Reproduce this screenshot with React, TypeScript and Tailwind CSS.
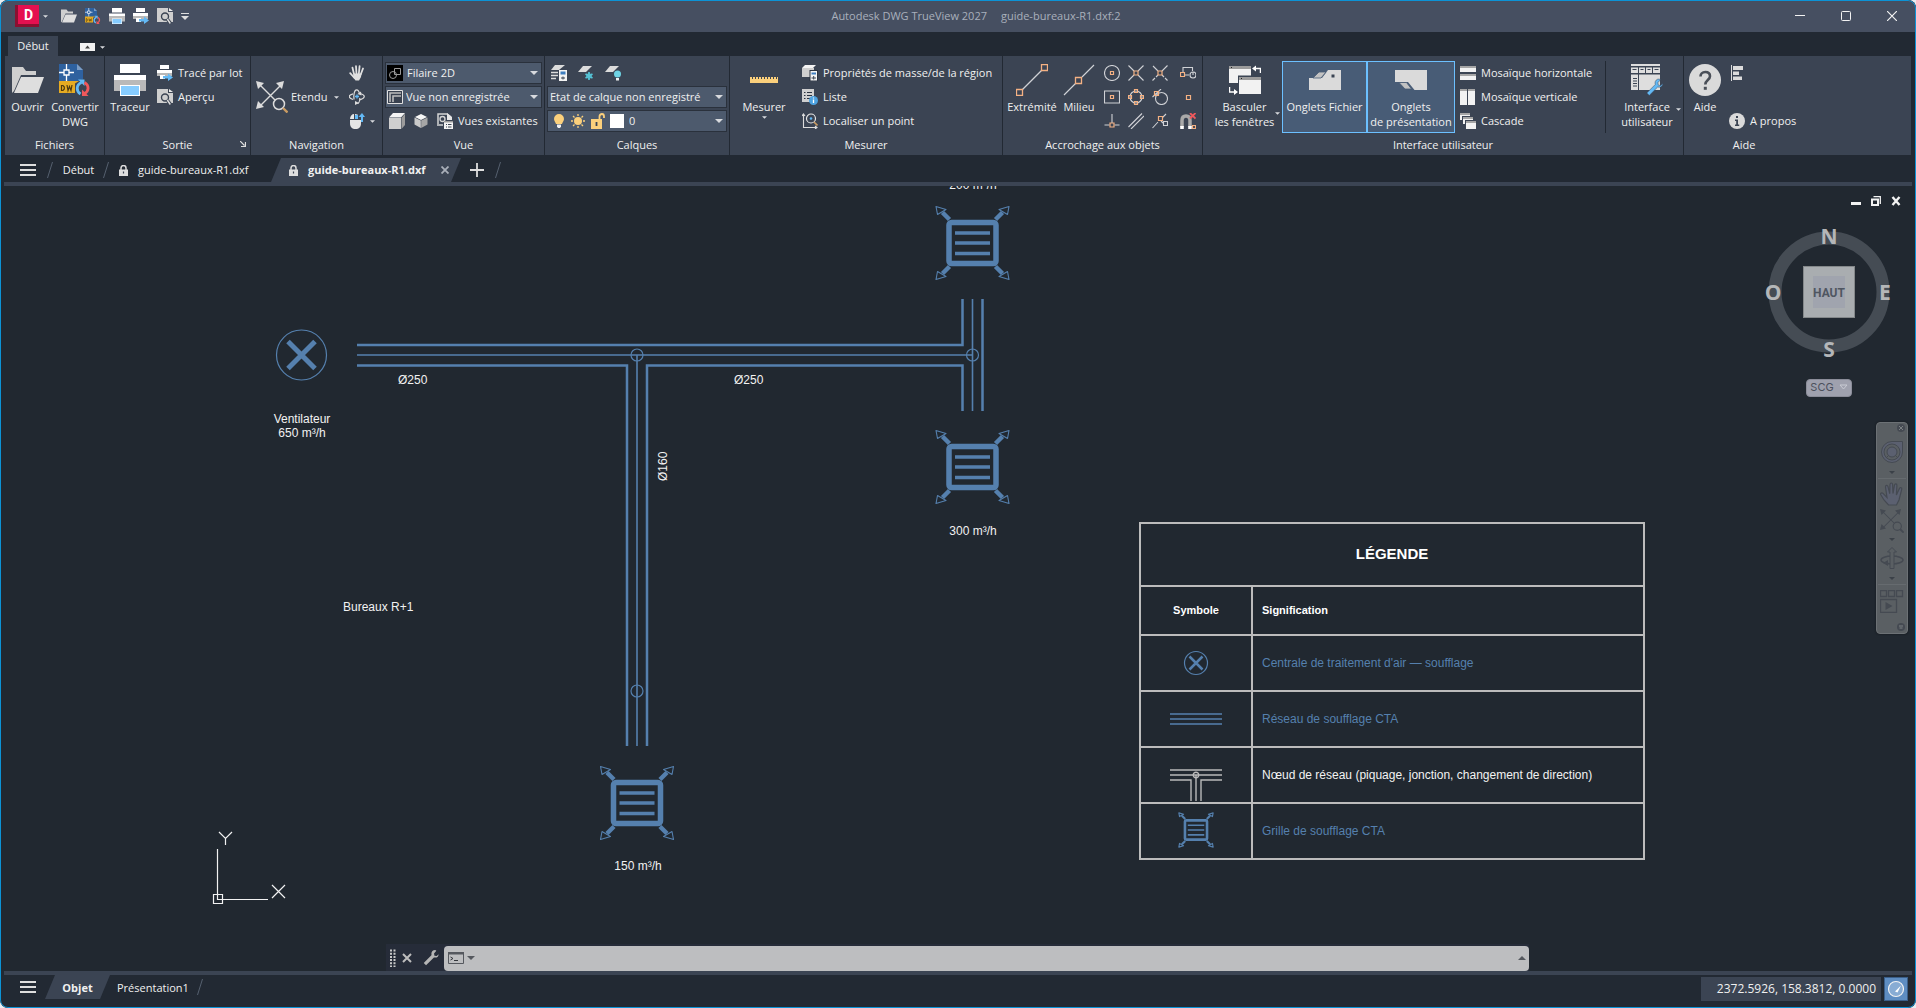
import type { ReactNode } from "react";

/* ------------------------------------------------------------------ */
/* Icon primitives                                                     */
/* ------------------------------------------------------------------ */

type IconProps = { size?: number };

function Svg({ w, h, vb, children }: { w: number; h?: number; vb: string; children: ReactNode }) {
  return (
    <svg width={w} height={h ?? w} viewBox={vb} fill="none" aria-hidden="true" className="shrink-0">
      {children}
    </svg>
  );
}

function Caret({ up = false, small = false }: { up?: boolean; small?: boolean }) {
  return (
    <Svg w={small ? 5 : 8} h={small ? 3 : 4} vb="0 0 8 4">
      <path d={up ? "M0 4h8L4 0z" : "M0 0h8L4 4z"} fill="#d8dade" />
    </Svg>
  );
}

function FolderIcon({ size = 32 }: IconProps) {
  return (
    <Svg w={size} vb="0 0 32 32">
      <path d="M0 3h11l3 4h10v4H9L2 27l-2 2z" fill="#cfcfcf" />
      <path d="M9 13h23l-6 16H2z" fill="#dedede" />
    </Svg>
  );
}

function DwgIcon({ size = 32, bg = "#3b4453" }: IconProps & { bg?: string }) {
  return (
    <Svg w={size} vb="0 0 32 32">
      <path d="M0 0h18l6 6v12H0z" fill="#2e619f" />
      <path d="M18 0v6h6z" fill="#7b9cc4" />
      <path d="M0 17h24v12H0z" fill="#e6ab22" />
      <path d="M0 8.500h5M10 8.500h5M7.500 0v6M7.500 11v6M5 6h5v5H5z" stroke="#fff" strokeWidth="1.300" />
      <path d="M2.500 21v6M2.500 21.500h1.500l1.300 1.500v2l-1.300 1.500H2.500M8 21l1 5.500 1.500-4 1.500 4 1-5.500" stroke="#4c3a10" strokeWidth="1.200" />
      <path d="M22.500 15.500h9.500v16h-16v-12z" fill={bg} />
      <path d="M21.500 30c-4.500-3-4.500-9 1-11.500" stroke="#63b9f5" strokeWidth="2.800" />
      <path d="M19 15.500h6.500v6.500z" fill="#63b9f5" />
      <path d="M25.500 18.500c5 3 4.500 8.500 0 11" stroke="#f0585c" strokeWidth="2.800" />
      <path d="M29.500 32h-6.500v-6.500z" fill="#f0585c" />
    </Svg>
  );
}

function PrinterIcon({ size = 32 }: IconProps) {
  return (
    <Svg w={size} vb="0 0 32 32">
      <path d="M6 0h20v9H6z" fill="#fff" />
      <path d="M0 11h32v5H0z" fill="#fff" />
      <path d="M0 16h32v11H0z" fill="#b9b9b9" />
      <path d="M6 21h20v11H6z" fill="#fff" />
      <path d="M7 22h18v9H7z" fill="#86ccff" />
    </Svg>
  );
}

function BatchPlotIcon() {
  return (
    <Svg w={16} vb="0 0 16 16">
      <path d="M3 0h9v4H3z" fill="#fff" />
      <path d="M0 5h15v3H0z" fill="#fff" />
      <path d="M0 8h15v3H0z" fill="#b9b9b9" />
      <path d="M3 10h5v4H3z" fill="#fff" />
      <path d="M6 11h5V8.500l5 4-5 3.500v-2.500H6z" fill="#63b9f5" />
    </Svg>
  );
}

function PreviewIcon() {
  return (
    <Svg w={16} vb="0 0 16 16">
      <path d="M0 0h11v4h5v10H0z" fill="#cfcfcf" />
      <path d="M12 0l4 3h-4z" fill="#eee" />
      <circle cx="8" cy="8.500" r="3.500" fill="#cfcfcf" stroke="#3b4453" strokeWidth="1.400" />
      <path d="M10.500 11.500l3 4" stroke="#3b4453" strokeWidth="3.400" />
      <path d="M10.300 11l3 4.500" stroke="#dedede" strokeWidth="1.400" />
    </Svg>
  );
}

function ZoomExtentsIcon({ size = 32, color = "#dcdcdc", handle = "#c99b62" }: IconProps & { color?: string; handle?: string }) {
  return (
    <Svg w={size} vb="0 0 32 32">
      <path d="M3 3l16 16M26 3L3 26" stroke={color} strokeWidth="1.400" />
      <path d="M0 0l8 2-6 6zM28 0l-8 2 6 6zM0 28l2-8 6 6z" fill={color} />
      <circle cx="23" cy="23" r="5.500" stroke={color} strokeWidth="1.500" />
      <path d="M27 27l4.500 4.500" stroke={handle} strokeWidth="2.400" />
    </Svg>
  );
}

function HandIcon({ size = 16, color = "#e0e0e0" }: IconProps & { color?: string }) {
  return (
    <Svg w={size} vb="0 0 16 16">
      <path d="M4.500 8.500h8L12 12l-2 3.500H6.500L4 12z" fill={color} />
      <path d="M5 9L3.500 2.700M7.500 9L7 1.200M9.800 9l.8-7.800M11.700 9.500l2.300-6M5.500 13L1.200 8.200" stroke={color} strokeWidth="1.800" strokeLinecap="round" />
    </Svg>
  );
}

function OrbitIcon() {
  return (
    <Svg w={16} vb="0 0 16 16">
      <path d="M5 10.500C4.300 5.500 5.500.800 7.500.800c1.500 0 2.700 1.700 3 4.200M10.800 9c0 3-1.200 5.500-2.500 5.500" stroke="#dcdcdc" strokeWidth="1.200" />
      <path d="M4 10.500C-1 9-1 6 4 4.800M12 4.800c4.500 1.500 4.500 4.500-1 6" stroke="#dcdcdc" strokeWidth="1.200" />
      <path d="M8 5.500v4M6 7.500h4" stroke="#63b9f5" strokeWidth="1.300" />
      <path d="M6 12l4 2-4 2zM12 2.500l-3.500 2.500 4 1.500z" fill="#dcdcdc" />
    </Svg>
  );
}

function MouseIcon() {
  return (
    <Svg w={16} vb="0 0 16 16">
      <path d="M1 7h11v3c0 4-2 6-5.500 6S1 14 1 10z" fill="#e6e6e6" />
      <path d="M1 6c0-3 2-5 4-5v5zM6 1c2 0 3 1 3 1v4H6z" fill="#e6e6e6" />
      <path d="M6 2h3v4H6z" fill="#63b9f5" />
      <path d="M12 9V4h-2.500L13 0l3 4h-2v5z" fill="#63b9f5" />
    </Svg>
  );
}

function WireframeIcon() {
  return (
    <Svg w={16} vb="0 0 16 16">
      <path d="M0 0h16v16H0z" fill="#000" />
      <circle cx="6" cy="10" r="3.500" stroke="#9a9a9a" />
      <path d="M7.500 3.500h6v6h-6z" stroke="#9a9a9a" />
    </Svg>
  );
}

function NamedViewIcon() {
  return (
    <Svg w={16} h={14} vb="0 0 16 14">
      <path d="M.5.500h15v13H.5z" fill="#39414f" stroke="#e0e0e0" />
      <path d="M3 12V3h11M6 12V6h8" stroke="#bdbdbd" strokeWidth="1.600" />
    </Svg>
  );
}

function CubeIcon() {
  return (
    <Svg w={16} vb="0 0 16 16">
      <path d="M0 4.500L4 0h12l-4 4.500z" fill="#f4f4f4" />
      <path d="M0 5h12v11H0z" fill="#cfcfcf" />
      <path d="M12.500 5L16 .8V12l-3.500 4z" fill="#9c9c9c" />
    </Svg>
  );
}

function IsoCubeIcon() {
  return (
    <Svg w={14} vb="0 0 14 14">
      <path d="M7 0l6 3-6 3-6-3z" fill="#f6f6f6" />
      <path d="M.5 3.500L6.800 6.600V14L.5 10.500z" fill="#cacaca" />
      <path d="M13.500 3.500L7.200 6.600V14l6.300-3.500z" fill="#a6a6a6" />
    </Svg>
  );
}

function ViewsIcon() {
  return (
    <Svg w={16} vb="0 0 16 16">
      <path d="M1 11V1h9l4 3" stroke="#d5d5d5" strokeWidth="1.500" />
      <path d="M10 0l5 4v3h-5z" fill="#e6e6e6" />
      <circle cx="5.500" cy="6" r="2.500" stroke="#d5d5d5" strokeWidth="1.300" />
      <path d="M0 12h6" stroke="#d5d5d5" strokeWidth="1.500" />
      <path d="M7 8h9v8H7z" fill="#f4f4f4" />
      <path d="M9 11.500h1M11 11.500h3.500M9 14h1M11 14h3.500" stroke="#3b4453" />
      <path d="M7 8h9v1.500H7z" fill="#9c9c9c" />
    </Svg>
  );
}

function LayerPropsIcon() {
  return (
    <Svg w={16} vb="0 0 16 16">
      <path d="M4 0h10L8 5H0z" fill="#dcdcdc" />
      <path d="M0 7.500h7M0 10.500h7M0 13.500h5" stroke="#dcdcdc" strokeWidth="1.500" />
      <path d="M8 5h8v11H8z" fill="#f4f4f4" />
      <path d="M9.500 6.500h5v3h-5z" fill="#3f7fc0" />
      <path d="M10 13h4M12 11.500v3" stroke="#3b4453" />
    </Svg>
  );
}

function LayerFreezeIcon() {
  return (
    <Svg w={16} vb="0 0 16 16">
      <path d="M5 1h9L8 7H0z" fill="#dcdcdc" />
      <path d="M11 7v8M7.500 9l7 4M14.500 9l-7 4" stroke="#55c3d6" strokeWidth="1.700" />
      <circle cx="11" cy="11" r="2.300" stroke="#55c3d6" />
    </Svg>
  );
}

function LayerOffIcon() {
  return (
    <Svg w={16} vb="0 0 16 16">
      <path d="M5 1h9L8 7H0z" fill="#dcdcdc" />
      <circle cx="12.500" cy="9" r="3.500" fill="#6fd3e4" />
      <path d="M11 13h3v2.500h-3z" fill="#f0f0f0" />
    </Svg>
  );
}

function BulbIcon() {
  return (
    <Svg w={12} h={14} vb="0 0 12 14">
      <path d="M6 0a5 5 0 0 1 5 5c0 2-1.500 3-2 5H3C2.500 8 1 7 1 5a5 5 0 0 1 5-5z" fill="#fbd07c" />
      <path d="M4 10.500h4v2L7 14H5l-1-1.500z" fill="#f0f0f0" />
    </Svg>
  );
}

function SunIcon() {
  return (
    <Svg w={16} vb="0 0 16 16">
      <circle cx="8" cy="8" r="4" fill="#fbd07c" />
      <path d="M8 1v2M8 13v2M1 8h2M13 8h2M3 3l1.500 1.500M11.500 11.500L13 13M13 3l-1.500 1.500M4.500 11.500L3 13" stroke="#fbd07c" strokeWidth="1.300" />
    </Svg>
  );
}

function UnlockIcon() {
  return (
    <Svg w={14} h={16} vb="0 0 14 16">
      <path d="M0 6h11v10H0z" fill="#fbd07c" />
      <path d="M8.500 6V3.500C8.500 2 9.500 1 11 1s2 1 2 2.500V5" stroke="#fbd07c" strokeWidth="1.800" />
      <path d="M5.500 9v4" stroke="#3b4453" strokeWidth="1.800" />
    </Svg>
  );
}

function RulerIcon() {
  return (
    <Svg w={28} h={6} vb="0 0 28 6">
      <path d="M0 0h28v6H0z" fill="#fbd07c" />
      <path d="M2.500 0v2M5.500 0v2M8.500 0v2M11.500 0v2M14.500 0v2M17.500 0v2M20.500 0v2M23.500 0v2M26.500 0v2" stroke="#3b4453" />
    </Svg>
  );
}

function MassPropsIcon() {
  return (
    <Svg w={16} vb="0 0 16 16">
      <path d="M0 3l3-3h11l-3 3z" fill="#f4f4f4" />
      <path d="M0 3h12v9H0z" fill="#cfcfcf" />
      <path d="M7.500 5h8.500v11H7.500z" fill="#2b3340" />
      <path d="M8.500 6h6.500v9.500H8.500z" fill="#f4f4f4" />
      <path d="M9.500 7.500h4.500v2H9.500z" fill="#3f7fc0" />
      <path d="M9.500 13h4.500M11.700 11v3.500" stroke="#3b4453" />
    </Svg>
  );
}

function ListIcon() {
  return (
    <Svg w={16} vb="0 0 16 16">
      <path d="M0 0h12v13H0z" fill="#cfcfcf" />
      <path d="M2 3.500h1.500M5 3.500h5M2 6.500h1.500M5 6.500h5M2 9.500h1.500M5 9.500h3" stroke="#2b3340" />
      <circle cx="11.500" cy="11.500" r="4.500" fill="#4da2e0" />
      <path d="M11.500 10.500V14M11.500 8.500v1" stroke="#fff" strokeWidth="1.300" />
    </Svg>
  );
}

function LocateIcon() {
  return (
    <Svg w={16} vb="0 0 16 16">
      <path d="M1.500 1v13.500H15M0 3l1.500-2L3 3M13 13l2 1.500-2 1.500" stroke="#dcdcdc" strokeWidth="1.100" />
      <circle cx="9" cy="5.500" r="4.500" stroke="#e6e6e6" strokeWidth="1.200" />
      <circle cx="9" cy="5.500" r="1.300" fill="#63b9f5" />
      <path d="M12 9l3.500 3.500" stroke="#c99b62" strokeWidth="1.700" />
    </Svg>
  );
}

const snapLine = "#d0d2d6";
const snapMark = "#f4b183";

function EndpointIcon() {
  return (
    <Svg w={32} vb="0 0 32 32">
      <path d="M6 26L26 6" stroke={snapLine} strokeWidth="1.200" />
      <path d="M.5 25.500h6v6h-6zM25.500.500h6v6h-6z" stroke={snapMark} strokeWidth="1.300" />
    </Svg>
  );
}

function MidpointIcon() {
  return (
    <Svg w={32} vb="0 0 32 32">
      <path d="M1 31l12-12M19 13L31 1" stroke={snapLine} strokeWidth="1.200" />
      <path d="M12.500 13.500h6v6h-6z" stroke={snapMark} strokeWidth="1.300" />
    </Svg>
  );
}

function SnapIcon({ line, mark }: { line: string; mark: string }) {
  return (
    <Svg w={16} vb="0 0 16 16">
      <path d={line} stroke={snapLine} strokeWidth="1.100" />
      <path d={mark} stroke={snapMark} strokeWidth="1.200" />
    </Svg>
  );
}

const snaps: { name: string; line: string; mark: string }[] = [
  { name: "Centre", line: "M15.500 8A7.500 7.500 0 1 1 .5 8a7.500 7.500 0 0 1 15 0z", mark: "M6.500 6.500h3v3h-3z" },
  { name: "Intersection", line: "M.5.500l5.500 5.500M10 10l5.500 5.500M15.500.500L10 6M6 10L.5 15.500", mark: "M6 6h4v4H6z" },
  { name: "Intersection projetée", line: "M1 1l5 5M10 10l2 2M13 13l2.500 2.500M15.500.500L10 6M6 10l-2 2M3 13L.5 15.500", mark: "M6 6h4v4H6z" },
  { name: "Insertion", line: "M3 8V2.500h9.500V6M5 10h4M16 10a3 3 0 1 1-6 0 3 3 0 0 1 6 0zM13 7v3", mark: "M.5 7.500h4v4h-4z" },
  { name: "Centre géométrique", line: "M.5 2h15v12H.5z", mark: "M6.500 6.500h3v3h-3z" },
  { name: "Quadrant", line: "M14 8A6 6 0 1 1 2 8a6 6 0 0 1 12 0z", mark: "M6.500.500h3v3h-3zM6.500 12.500h3v3h-3zM.5 6.500h3v3h-3zM12.500 6.500h3v3h-3z" },
  { name: "Tangente", line: "M15.500 9.500a6 6 0 1 1-12 0 6 6 0 0 1 12 0zM.5 8L9 0", mark: "M2.500 2.500h4v4h-4z" },
  { name: "Nodal", line: "", mark: "M6.500 6.500h4v4h-4z" },
  { name: "Perpendiculaire", line: "M8 1v9M.5 12h5M10.500 12h5", mark: "M6 10h4v4H6z" },
  { name: "Parallèle", line: "M.5 14L14 .5M3 16L16 3", mark: "" },
  { name: "Proche", line: "M.5 15L6 9M10.500 4.500L14 1M11.500 8.500h4v4h-4zM9 8l2 2", mark: "M6.500 3.500h4v4h-4z" },
];

function SnapOffIcon() {
  return (
    <Svg w={16} vb="0 0 16 16">
      <path d="M2 14V7.500C2 4.500 3.700 3 6 3s4 1.500 4 4.500V14" stroke="#a9a9a9" strokeWidth="3.500" />
      <path d="M.2 13h3.600v3H.2zM8.200 13h3.600v3H8.200z" fill="#fff" />
      <path d="M10 0l5.500 5.500M15.500 0L10 5.500" stroke="#f0585c" strokeWidth="1.800" />
      <path d="M12.500 12.500h3v3h-3z" stroke={snapMark} strokeWidth="1.200" />
    </Svg>
  );
}

function SwitchWindowsIcon() {
  return (
    <Svg w={32} vb="0 0 32 32">
      <path d="M0 2h22v17H0z" fill="#f2f2f2" />
      <path d="M0 2h22v3H0z" fill="#9b9b9b" />
      <path d="M9 11.500h23V30H9z" fill="#3b4453" />
      <path d="M10 13h22v17H10z" fill="#f2f2f2" />
      <path d="M10 13h22v3H10z" fill="#9b9b9b" />
      <path d="M2 3h1v1H2zM12 14h1v1h-1z" fill="#222" />
      <path d="M31.500 9V4.500H26M.5 23v5H6" stroke="#fff" strokeWidth="1.500" />
      <path d="M27 1.500l-4 3 4 3zM5 25l4 3-4 3z" fill="#fff" />
    </Svg>
  );
}

function FileTabsIcon() {
  return (
    <Svg w={32} h={20} vb="0 0 32 20">
      <path d="M0 8h13l6-8h13v20H0z" fill="#dadada" />
      <path d="M4 8l6-6h7l-5 6z" fill="#c2c2c2" stroke="#485b74" strokeWidth=".8" />
      <path d="M22.500 4.500h3v3h-3z" fill="#3b4453" />
    </Svg>
  );
}

function LayoutTabsIcon() {
  return (
    <Svg w={32} h={20} vb="0 0 32 20">
      <path d="M0 0h32v20H19.500L13 12H0z" fill="#dadada" />
      <path d="M4 12.500h7.500l5 6.500H10z" fill="#c2c2c2" stroke="#485b74" strokeWidth=".8" />
    </Svg>
  );
}

function TileHorizontalIcon() {
  return (
    <Svg w={16} vb="0 0 16 16">
      <path d="M0 1h16v6H0zM0 9h16v6H0z" fill="#f2f2f2" />
      <path d="M0 1h16v2H0zM0 9h16v2H0z" fill="#a5a5a5" />
    </Svg>
  );
}

function TileVerticalIcon() {
  return (
    <Svg w={16} vb="0 0 16 16">
      <path d="M0 0h7v16H0zM8 0h7v16H8z" fill="#f2f2f2" />
      <path d="M0 0h7v2H0zM8 0h7v2H8z" fill="#a5a5a5" />
    </Svg>
  );
}

function CascadeIcon() {
  return (
    <Svg w={16} vb="0 0 16 16">
      <path d="M0 0h10v7H0z" fill="#f2f2f2" />
      <path d="M0 0h10v2H0z" fill="#a5a5a5" />
      <path d="M2 3h11v8H2z" fill="#3b4453" />
      <path d="M3 4h10v7H3z" fill="#f2f2f2" />
      <path d="M3 4h10v2H3z" fill="#a5a5a5" />
      <path d="M5 7h11v9H5z" fill="#3b4453" />
      <path d="M6 8h10v8H6z" fill="#f2f2f2" />
      <path d="M6 8h10v2H6z" fill="#a5a5a5" />
    </Svg>
  );
}

const wrench = "M16 0c-3 0-5 2-5 5 0 .7.100 1.200.3 1.700L1 17l3 3L14.300 9.700c.5.200 1 .3 1.700.3 3 0 4.500-2 4.500-4.500L18 8l-3-.5L14.500 4.500 17.500 1z";

function InterfaceIcon() {
  return (
    <Svg w={32} vb="0 0 32 32">
      <path d="M0 0h29v2H0zM0 3.500h7V9H0zM8 3.500h6V9H8zM15 3.500h6V9h-6zM22 3.500h7V9h-7zM0 10.500h7V26H0zM8 10.500h21V26H8z" fill="#dedede" />
      <path d="M1.500 5.500h4M9.500 5.500h3M16.500 5.500h3M23.500 5.500h4M2 14.500h4M2 17h4M2 19.500h4M2 22h4" stroke="#3b4453" />
      <path d={wrench} fill="#63b9f5" stroke="#3b4453" strokeWidth=".6" transform="translate(15 15) scale(.82)" />
    </Svg>
  );
}

function HelpIcon() {
  return (
    <Svg w={32} vb="0 0 32 32">
      <circle cx="16" cy="16" r="16" fill="#dadada" />
      <path d="M11.500 12.500c0-2.500 1.800-4.500 4.800-4.500s4.700 1.800 4.700 4.200c0 3.800-4.700 3.800-4.700 8.300" stroke="#4a4f58" strokeWidth="2.600" />
      <path d="M14.800 22.800h3v3h-3z" fill="#4a4f58" />
    </Svg>
  );
}

function AlignIcon() {
  return (
    <Svg w={12} h={16} vb="0 0 12 16">
      <path d="M.5 0v16" stroke="#dcdcdc" />
      <path d="M2 1h10v4H2zM2 6.500h6v3.500H2zM2 11.500h9V15H2z" fill="#dcdcdc" />
    </Svg>
  );
}

function InfoIcon() {
  return (
    <Svg w={16} vb="0 0 16 16">
      <circle cx="8" cy="8" r="8" fill="#dadada" />
      <path d="M7 3h2v2H7zM6 6.500h3v5h1.200V13H6v-1.500h1.200v-3.500H6z" fill="#3b4453" />
    </Svg>
  );
}

function LockIcon() {
  return (
    <Svg w={9} h={11} vb="0 0 9 11">
      <path d="M0 4.500h9V11H0z" fill="#dedede" />
      <path d="M2 5V3a2.500 2.500 0 0 1 5 0v2" stroke="#dedede" strokeWidth="1.500" />
      <path d="M4.500 6.500v2" stroke="#3b4453" strokeWidth="1.200" />
    </Svg>
  );
}

function MenuIcon() {
  return (
    <Svg w={16} h={12} vb="0 0 16 12">
      <path d="M0 1h16M0 6h16M0 11h16" stroke="#dedede" strokeWidth="2" />
    </Svg>
  );
}

function Slash() {
  return (
    <Svg w={6} h={16} vb="0 0 6 16">
      <path d="M.5 16L5.500 0" stroke="#566070" />
    </Svg>
  );
}

/* ------------------------------------------------------------------ */
/* Ribbon building blocks                                              */
/* ------------------------------------------------------------------ */

function Panel({ title, width, last = false, launcher = false, children }: { title: string; width: string; last?: boolean; launcher?: boolean; children: ReactNode }) {
  return (
    <section className={`flex shrink-0 flex-col pt-[5px] ${width} ${last ? "" : "border-r border-[#222933]"}`} aria-label={title}>
      <div className="flex h-[72px]">{children}</div>
      <div className="relative flex h-[22px] items-center justify-center">
        {title}
        {launcher && (
          <button type="button" aria-label="Options de sortie" className="absolute right-1 top-2">
            <Svg w={6} vb="0 0 6 6">
              <path d="M0 0l4.500 4.500M5.500 1v4.500H1" stroke="#dedede" strokeWidth="1.200" />
            </Svg>
          </button>
        )}
      </div>
    </section>
  );
}

function BigButton({ icon, label, width, caret = false, active = false }: { icon: ReactNode; label: string[]; width: string; caret?: boolean; active?: boolean }) {
  return (
    <button
      type="button"
      className={`relative flex shrink-0 flex-col items-center leading-[15px] ${width} ${active ? "border border-[#6cc0ff] bg-[#485c76] pt-[2px]" : "pt-[3px]"}`}
    >
      <span className="flex h-8 items-center justify-center">{icon}</span>
      <span className="mt-[3px] whitespace-nowrap">
        {label.map((l) => (
          <span key={l} className="block">{l}</span>
        ))}
      </span>
      {caret && (
        <span className="absolute bottom-[18px] right-[2px]">
          <Caret small />
        </span>
      )}
    </button>
  );
}

function SmallButton({ icon, label, caret = false }: { icon: ReactNode; label?: string; caret?: boolean }) {
  return (
    <button type="button" aria-label={label ? undefined : "Outil"} className="flex h-6 items-center gap-[5px] whitespace-nowrap">
      {icon}
      {label && <span className="pb-[2px]">{label}</span>}
      {caret && <Caret small />}
    </button>
  );
}

function Combo({ label, value, pad, children }: { label: string; value: string; pad: string; children?: ReactNode }) {
  return (
    <div className="relative h-[22px] w-full">
      <select aria-label={label} defaultValue={value} className={`h-[22px] w-full appearance-none truncate border border-[#2a313c] bg-[#4d5a6d] pb-[2px] pr-5 outline-none ${pad}`}>
        <option>{value}</option>
      </select>
      <span className="pointer-events-none absolute inset-y-0 left-[2px] flex items-center gap-1">{children}</span>
      <span className="pointer-events-none absolute inset-y-0 right-1 flex items-center">
        <Caret />
      </span>
    </div>
  );
}

/* ------------------------------------------------------------------ */
/* Drawing                                                             */
/* ------------------------------------------------------------------ */

function Fan() {
  return (
    <g stroke="#5580ae">
      <circle r="25" strokeWidth="1.200" />
      <path d="M-13.500-13.500l27 27M13.500-13.500l-27 27" strokeWidth="5" />
    </g>
  );
}

function Grille({ thin = "1.100" }: { thin?: string }) {
  return (
    <g stroke="#5580ae" strokeLinejoin="round">
      <rect x="-23.500" y="-20.500" width="47" height="41" rx="2.500" strokeWidth="5.500" />
      <path d="M-17.500-10h35M-17.500 0h35M-17.500 10.500h35" strokeWidth="3.500" />
      {["1 1", "-1 1", "1 -1", "-1 -1"].map((s) => (
        <g key={s} transform={`scale(${s})`}>
          <path d="M-30-30.500l7 7" strokeWidth="4.500" />
          <path d="M-36.500-36.500l1.500 8 8.500-5z" strokeWidth={thin} />
        </g>
      ))}
    </g>
  );
}

function Drawing() {
  return (
    <svg className="absolute inset-0 h-full w-full" fill="none" role="img" aria-label="Plan du réseau de soufflage" fontFamily="Liberation Sans, Arial, sans-serif" fontSize="12">
      <g transform="translate(0 -186)">
        <g stroke="#5580ae">
          <path d="M357 345H962.500V299M357 365.500H627V746M647 746V365.500H962.500V411M982.500 299V411" strokeWidth="2.500" />
          <path d="M357 355H972.500M637 355V746M972.500 299V411" strokeWidth="1.600" />
          <g strokeWidth="1.200">
            <circle cx="637" cy="355" r="6" />
            <circle cx="972.500" cy="355" r="6" />
            <circle cx="637" cy="691" r="6" />
          </g>
        </g>
        <g transform="translate(301.500 355)"><Fan /></g>
        <g transform="translate(972.500 243)"><Grille /></g>
        <g transform="translate(972.500 467)"><Grille /></g>
        <g transform="translate(637 803)"><Grille /></g>
        <g fill="#f2f2f2">
          <text x="398" y="384">Ø250</text>
          <text x="734" y="384">Ø250</text>
          <text x="302" y="423" textAnchor="middle">Ventilateur</text>
          <text x="302" y="437" textAnchor="middle">650 m³/h</text>
          <text x="343" y="611">Bureaux R+1</text>
          <text x="973" y="189" textAnchor="middle">200 m³/h</text>
          <text x="973" y="535" textAnchor="middle">300 m³/h</text>
          <text x="638" y="870" textAnchor="middle">150 m³/h</text>
          <text transform="translate(667 481) rotate(-90)">Ø160</text>
        </g>
        <g stroke="#f2f2f2" strokeWidth="1.200">
          <path d="M217.500 849v50.500H268M213.500 894.500h9v9h-9zM219 832l6.500 6.500 6.500-6.500M225.500 838.500v6.500M272 885l13 13M285 885l-13 13" />
        </g>
      </g>
    </svg>
  );
}

function LegendSymbol({ kind }: { kind: string }) {
  return (
    <svg width="56" height="40" viewBox="-28 -20 56 40" fill="none" className="mx-auto block overflow-visible" aria-hidden="true">
      {kind === "fan" && (
        <g stroke="#5580ae">
          <circle r="11.500" strokeWidth="1.200" />
          <path d="M-6.500-6.500l13 13M6.500-6.500l-13 13" strokeWidth="2.500" />
        </g>
      )}
      {kind === "duct" && <path d="M-26-5h52M-26 0h52M-26 5h52" stroke="#5580ae" strokeWidth="1.400" />}
      {kind === "node" && (
        <g stroke="#b9b9b9" strokeWidth="1.400">
          <path d="M-26-5h52M-26 0h52M-26 5h21v21M26 5H5v21M0 0v26" />
          <circle r="2.800" />
        </g>
      )}
      {kind === "grille" && (
        <g transform="translate(0 -1) scale(.47)"><Grille thin="2.400" /></g>
      )}
    </svg>
  );
}

const legendRows = [
  { kind: "fan", text: "Centrale de traitement d'air — soufflage", color: "text-[#5580ae]" },
  { kind: "duct", text: "Réseau de soufflage CTA", color: "text-[#5580ae]" },
  { kind: "node", text: "Nœud de réseau (piquage, jonction, changement de direction)", color: "text-[#f2f2f2]" },
  { kind: "grille", text: "Grille de soufflage CTA", color: "text-[#5580ae]" },
];

function Legend() {
  return (
    <table className="absolute left-[1139px] top-[336px] w-[506px] border-collapse border-2 border-[#bcbcbc] font-['Liberation_Sans',Arial,sans-serif] text-[12px] text-white">
      <thead>
        <tr className="h-[63px]">
          <th colSpan={2} className="border-2 border-[#bcbcbc] p-0 pb-[2px] text-[15px] font-bold">LÉGENDE</th>
        </tr>
        <tr className="h-[49px] text-[11px]">
          <th className="w-[112px] border-2 border-[#bcbcbc] p-0 font-bold">Symbole</th>
          <th className="border-2 border-[#bcbcbc] py-0 pl-[9px] text-left font-bold">Signification</th>
        </tr>
      </thead>
      <tbody>
        {legendRows.map((r) => (
          <tr key={r.kind} className="h-14">
            <td className="border-2 border-[#bcbcbc] p-0">
              <LegendSymbol kind={r.kind} />
            </td>
            <td className={`whitespace-nowrap border-2 border-[#bcbcbc] py-0 pl-[9px] ${r.color}`}>{r.text}</td>
          </tr>
        ))}
      </tbody>
    </table>
  );
}

function ViewCube() {
  return (
    <div className="absolute right-[12px] top-[26px] flex flex-col items-center">
      <svg width="150" height="160" viewBox="-75 -80 150 160" role="img" aria-label="ViewCube" fontFamily="Open Sans, sans-serif" fontWeight="700" textAnchor="middle">
        <circle r="54" fill="none" stroke="#454c54" strokeWidth="13" />
        <rect x="-25.500" y="-25.500" width="51" height="51" fill="#a9adb0" stroke="#84888a" />
        <rect x="-16" y="-16" width="32" height="32" fill="#a0a4ae" />
        <g fill="#b4b6b8" fontSize="21">
          <text x="0" y="-48">N</text>
          <text x="-56" y="8">O</text>
          <text x="56" y="8">E</text>
          <text x="0" y="65">S</text>
        </g>
        <text y="5" fontSize="12" fill="#4f5661" fontFamily="Roboto, sans-serif">HAUT</text>
      </svg>
      <button type="button" className="mt-[7px] flex h-[18px] w-[46px] items-center justify-center gap-[5px] rounded border border-[#8b8d99] bg-[#9fa1ae] pb-[2px] font-['Inter',sans-serif] text-[11px] text-[#4c505c]">
        SCG
        <Svg w={9} h={6} vb="0 0 9 6">
          <path d="M1 1h7L4.500 5z" stroke="#c9cbd4" />
        </Svg>
      </button>
    </div>
  );
}

function NavCaret() {
  return (
    <Svg w={6} h={3} vb="0 0 6 3">
      <path d="M0 0h6L3 3z" fill="#3b4148" />
    </Svg>
  );
}

function NavBar() {
  const c = "#454a52";
  return (
    <div className="absolute right-[8px] top-[236px] flex h-[212px] w-8 flex-col items-center rounded border border-[#6c7175] bg-[#5a5f63] shadow-[0_0_2px_#101418]">
      <button type="button" aria-label="Fermer la barre de navigation" className="mr-[2px] mt-[1px] self-end">
        <Svg w={8} vb="0 0 8 8"><circle cx="4" cy="4" r="4" fill={c} /><path d="M2 2l4 4M6 2L2 6" stroke="#7c8184" /></Svg>
      </button>
      <button type="button" aria-label="Disque de navigation" className="mt-[9px]">
        <Svg w={22} vb="0 0 22 22">
          <path d="M11 .5h10.500V11A10.500 10.500 0 1 1 11 .5z" fill="#5b6070" stroke={c} />
          <circle cx="11" cy="11" r="8" fill="#5a5f63" stroke={c} />
          <circle cx="11" cy="11" r="5" fill="#5b6070" stroke={c} />
          <path d="M5 17l2.500-2.500M17 17l-2.500-2.500" stroke={c} />
        </Svg>
      </button>
      <span className="mt-2"><NavCaret /></span>
      <span className="mt-1 h-px w-7 bg-[#666b6f]" />
      <button type="button" aria-label="Panoramique" className="mt-[3px]">
        <Svg w={24} vb="0 0 24 24">
          <path d="M7 15.500L5.500 5c0-2 2-2 2.500-.3l1.700 7L10 2.500c.2-2 2.500-2 2.600 0l.4 9 1.500-8.500c.5-1.800 2.500-1.400 2.400.4L16.400 13l3-6.500c1-1.500 2.700-.6 2.300.8L19 18l-2.500 5h-8L4 18 .8 12.800c-.8-1.500 1-2.500 2.200-1.400z" fill="#5b6070" stroke={c} strokeWidth="1.200" />
        </Svg>
      </button>
      <button type="button" aria-label="Zoom étendu" className="mt-[3px]">
        <ZoomExtentsIcon size={24} color={c} handle={c} />
      </button>
      <span className="mt-[5px]"><NavCaret /></span>
      <button type="button" aria-label="Orbite" className="mt-[6px]">
        <Svg w={24} h={22} vb="0 0 24 22">
          <ellipse cx="12" cy="13" rx="11" ry="4" stroke={c} strokeWidth="1.500" />
          <path d="M10 21.500V5H7.500L12 .5 16.500 5H14v16.500z" fill="#5a5f63" stroke={c} />
          <path d="M3 16l5-3v6z" fill={c} />
        </Svg>
      </button>
      <span className="mt-2"><NavCaret /></span>
      <span className="mt-1 h-px w-7 bg-[#666b6f]" />
      <button type="button" aria-label="ShowMotion" className="mt-[5px]">
        <Svg w={24} h={23} vb="0 0 24 23">
          <path d="M.5.500h6v6h-6zM8.500.500h6v6h-6zM16.500.500h6v6h-6zM.5 9.500h16v13H.5z" stroke={c} strokeWidth="1.300" />
          <path d="M5.500 12v8l7-4z" fill={c} />
        </Svg>
      </button>
      <button type="button" aria-label="Options" className="mb-[2px] mr-[2px] mt-auto self-end">
        <Svg w={8} vb="0 0 8 8"><circle cx="4" cy="4" r="4" fill={c} /><path d="M2 3h4M2.500 5h3" stroke="#7c8184" /></Svg>
      </button>
    </div>
  );
}

function CommandLine() {
  return (
    <div className="absolute bottom-0 left-[386px] right-[387px] flex h-[27px] items-center bg-[#262c39]">
      <div className="flex w-[58px] shrink-0 items-center">
        <span className="ml-[4px]">
          <Svg w={6} h={18} vb="0 0 6 18">
            <path d="M1 .500v18M4.500 .500v18" stroke="#c9c9c9" strokeWidth="2" strokeDasharray="2 1.200" />
          </Svg>
        </span>
        <button type="button" aria-label="Fermer" className="ml-[6px]">
          <Svg w={10} vb="0 0 10 10"><path d="M1 1l8 8M9 1L1 9" stroke="#bdbdbd" strokeWidth="2" /></Svg>
        </button>
        <button type="button" aria-label="Personnaliser" className="ml-[11px]">
          <Svg w={16} vb="0 0 21 21"><path d={wrench} fill="#b5b5b5" /></Svg>
        </button>
      </div>
      <label className="mt-px flex h-[25px] flex-1 items-center rounded-sm bg-[#bdbec0]">
        <span className="ml-1 flex items-center gap-[3px]">
          <Svg w={16} h={12} vb="0 0 16 12">
            <path d="M.5.500h15v11H.5z" stroke="#55585e" />
            <path d="M0 0h16v2.500H0z" fill="#55585e" />
            <path d="M2.500 5l2.500 1.500L2.500 8M6 8.500h4" stroke="#33363b" />
          </Svg>
          <Svg w={8} h={4} vb="0 0 8 4"><path d="M0 0h8L4 4z" fill="#55585e" /></Svg>
        </span>
        <input type="text" aria-label="Ligne de commande" className="h-full min-w-0 flex-1 bg-transparent px-2 text-[#222933] outline-none" />
        <span className="mr-[3px]">
          <Svg w={8} h={4} vb="0 0 8 4"><path d="M0 4h8L4 0z" fill="#55585e" /></Svg>
        </span>
      </label>
    </div>
  );
}

/* ------------------------------------------------------------------ */
/* Window                                                              */
/* ------------------------------------------------------------------ */

function TitleBar() {
  return (
    <header className="flex h-8 shrink-0 items-center bg-[#464f61]">
      <div className="flex w-[175px] shrink-0 items-center whitespace-nowrap pl-[15px]">
        <button type="button" aria-label="Menu de l'application" className="flex items-center gap-1">
          <span className="flex h-[22px] w-6 items-center justify-center border-b-[3px] border-l-[3px] border-[#8a1030] bg-[#e51050] font-['Roboto',sans-serif] text-[14px] font-bold leading-none text-white">D</span>
          <Caret small />
        </button>
        <div className="ml-[13px] flex items-center gap-2">
          <button type="button" aria-label="Ouvrir un fichier"><FolderIcon size={16} /></button>
          <button type="button" aria-label="Convertir"><DwgIcon size={16} bg="#464f61" /></button>
          <button type="button" aria-label="Tracer"><PrinterIcon size={16} /></button>
          <button type="button" aria-label="Publier"><BatchPlotIcon /></button>
          <button type="button" aria-label="Prévisualiser"><PreviewIcon /></button>
          <button type="button" aria-label="Personnaliser la barre d'accès rapide">
            <Svg w={8} h={7} vb="0 0 8 7"><path d="M0 0h8v1H0zM0 3h8L4 7z" fill="#dedede" /></Svg>
          </button>
        </div>
      </div>
      <div className="flex flex-1 justify-center gap-[14px] pb-[2px] text-[#a9b0bc]">
        <span>Autodesk DWG TrueView 2027</span>
        <span>guide-bureaux-R1.dxf:2</span>
      </div>
      <div className="mr-px flex shrink-0">
        <button type="button" aria-label="Réduire" className="flex h-8 w-[46px] items-center justify-center">
          <Svg w={10} vb="0 0 10 10"><path d="M0 4.500h10" stroke="#f2f2f2" /></Svg>
        </button>
        <button type="button" aria-label="Agrandir" className="flex h-8 w-[46px] items-center justify-center">
          <Svg w={10} vb="0 0 10 10"><rect x=".5" y=".5" width="9" height="9" rx="1" stroke="#f2f2f2" /></Svg>
        </button>
        <button type="button" aria-label="Fermer la fenêtre" className="flex h-8 w-[46px] items-center justify-center">
          <Svg w={10} vb="0 0 10 10"><path d="M0 0l10 10M10 0L0 10" stroke="#f2f2f2" strokeWidth="1.200" /></Svg>
        </button>
      </div>
    </header>
  );
}

function Ribbon() {
  return (
    <div className="mx-[5px] flex h-[99px] shrink-0 bg-[#3b4453]">
      <Panel title="Fichiers" width="w-[100px]">
        <BigButton icon={<FolderIcon />} label={["Ouvrir"]} width="w-[45px]" />
        <BigButton icon={<DwgIcon />} label={["Convertir", "DWG"]} width="w-[50px]" />
      </Panel>
      <Panel title="Sortie" width="w-[146px]" launcher>
        <BigButton icon={<PrinterIcon />} label={["Traceur"]} width="w-[50px]" />
        <div className="ml-[2px]">
          <SmallButton icon={<BatchPlotIcon />} label="Tracé par lot" />
          <SmallButton icon={<PreviewIcon />} label="Aperçu" />
        </div>
      </Panel>
      <Panel title="Navigation" width="w-[132px]">
        <button type="button" className="ml-[5px] flex w-[90px] shrink-0 items-center gap-[3px]">
          <ZoomExtentsIcon />
          <span className="pb-[2px]">Etendu</span>
          <span className="ml-1"><Caret small /></span>
        </button>
        <div className="ml-[3px]">
          <SmallButton icon={<HandIcon />} />
          <SmallButton icon={<OrbitIcon />} />
          <SmallButton icon={<MouseIcon />} caret />
        </div>
      </Panel>
      <Panel title="Vue" width="w-[162px]">
        <div className="flex w-full flex-col gap-[2px] px-[2px] pt-px">
          <Combo label="Style visuel" value="Filaire 2D" pad="pl-[21px]"><WireframeIcon /></Combo>
          <Combo label="Vue nommée" value="Vue non enregistrée" pad="pl-5"><NamedViewIcon /></Combo>
          <div className="flex h-[22px] items-center gap-[9px] pl-1">
            <button type="button" aria-label="Vue de dessus"><CubeIcon /></button>
            <button type="button" aria-label="Vue isométrique"><IsoCubeIcon /></button>
            <SmallButton icon={<ViewsIcon />} label="Vues existantes" />
          </div>
        </div>
      </Panel>
      <Panel title="Calques" width="w-[185px]">
        <div className="flex w-full flex-col gap-[2px] px-[2px] pt-px">
          <div className="flex h-[22px] items-center gap-[11px] pl-1">
            <button type="button" aria-label="Propriétés des calques"><LayerPropsIcon /></button>
            <button type="button" aria-label="Geler"><LayerFreezeIcon /></button>
            <button type="button" aria-label="Désactiver"><LayerOffIcon /></button>
          </div>
          <Combo label="Etat de calque" value="Etat de calque non enregistré" pad="pl-[2px]" />
          <Combo label="Calque" value="0" pad="pl-[81px]">
            <span className="ml-1 flex items-center gap-[5px]">
              <BulbIcon />
              <SunIcon />
              <UnlockIcon />
              <span className="h-[14px] w-[14px] bg-white" />
            </span>
          </Combo>
        </div>
      </Panel>
      <Panel title="Mesurer" width="w-[273px]">
        <button type="button" className="ml-[9px] flex w-[50px] shrink-0 flex-col items-center pt-[3px] leading-[15px]">
          <span className="flex h-8 items-center"><RulerIcon /></span>
          <span className="mt-[3px]">Mesurer</span>
          <span className="mt-[2px]"><Caret small /></span>
        </button>
        <div className="ml-[13px]">
          <SmallButton icon={<MassPropsIcon />} label="Propriétés de masse/de la région" />
          <SmallButton icon={<ListIcon />} label="Liste" />
          <SmallButton icon={<LocateIcon />} label="Localiser un point" />
        </div>
      </Panel>
      <Panel title="Accrochage aux objets" width="w-[200px]">
        <BigButton icon={<EndpointIcon />} label={["Extrémité"]} width="w-[58px]" />
        <BigButton icon={<MidpointIcon />} label={["Milieu"]} width="w-9" />
        <div className="ml-[7px] grid grid-cols-[24px_24px_28px_16px] grid-rows-[24px_24px_24px] items-center">
          {snaps.map((s) => (
            <button key={s.name} type="button" aria-label={s.name}>
              <SnapIcon line={s.line} mark={s.mark} />
            </button>
          ))}
          <button type="button" aria-label="Aucun accrochage"><SnapOffIcon /></button>
        </div>
      </Panel>
      <Panel title="Interface utilisateur" width="w-[481px]">
        <BigButton icon={<SwitchWindowsIcon />} label={["Basculer", "les fenêtres"]} width="w-[79px] pl-1" caret />
        <BigButton icon={<FileTabsIcon />} label={["Onglets Fichier"]} width="w-[85px]" active />
        <BigButton icon={<LayoutTabsIcon />} label={["Onglets", "de présentation"]} width="w-[88px]" active />
        <div className="ml-[5px] flex-1">
          <SmallButton icon={<TileHorizontalIcon />} label="Mosaïque horizontale" />
          <SmallButton icon={<TileVerticalIcon />} label="Mosaïque verticale" />
          <SmallButton icon={<CascadeIcon />} label="Cascade" />
        </div>
        <div className="border-l border-[#222933] pl-[2px]">
          <BigButton icon={<InterfaceIcon />} label={["Interface", "utilisateur"]} width="w-[75px] pl-[3px]" caret />
        </div>
      </Panel>
      <Panel title="Aide" width="w-[120px]" last>
        <BigButton icon={<HelpIcon />} label={["Aide"]} width="w-[42px]" />
        <div className="ml-[3px] flex flex-col">
          <span className="ml-[2px]"><SmallButton icon={<AlignIcon />} /></span>
          <span className="mt-6"><SmallButton icon={<InfoIcon />} label="A propos" /></span>
        </div>
      </Panel>
    </div>
  );
}

function DocumentTabs() {
  return (
    <nav className="mx-1 mt-[3px] flex h-[24px] shrink-0 items-center whitespace-nowrap pl-4" aria-label="Fichiers ouverts">
      <button type="button" aria-label="Menu des fichiers"><MenuIcon /></button>
      <span className="ml-[11px]"><Slash /></span>
      <button type="button" className="ml-[9px] w-[33px] pb-[2px]">Début</button>
      <span className="ml-[8px]"><Slash /></span>
      <button type="button" className="ml-[10px] flex items-center gap-[10px]">
        <LockIcon />
        <span className="w-[116px] pb-[2px] text-left">guide-bureaux-R1.dxf</span>
      </button>
      <div className="ml-[17px] flex h-full w-[190px] items-center bg-[#3b4453] pl-[18px] [clip-path:polygon(10px_0,100%_0,calc(100%_-_10px)_100%,0_100%)]">
        <button type="button" className="flex items-center gap-[10px] font-bold">
          <LockIcon />
          <span className="w-[128px] pb-[2px] text-left">guide-bureaux-R1.dxf</span>
        </button>
        <button type="button" aria-label="Fermer l'onglet" className="ml-[5px]">
          <Svg w={8} vb="0 0 8 8"><path d="M.5.500l7 7M7.500.500l-7 7" stroke="#a9afb9" strokeWidth="1.800" /></Svg>
        </button>
      </div>
      <button type="button" aria-label="Nouvel onglet" className="ml-[9px]">
        <Svg w={14} vb="0 0 14 14"><path d="M7 0v14M0 7h14" stroke="#dedede" strokeWidth="1.800" /></Svg>
      </button>
      <span className="ml-[11px]"><Slash /></span>
    </nav>
  );
}

function StatusBar() {
  return (
    <footer className="mx-1 flex h-[33px] shrink-0 items-start whitespace-nowrap pl-4">
      <div className="flex h-6 items-center">
        <button type="button" aria-label="Menu des présentations"><MenuIcon /></button>
        <button type="button" className="ml-[9px] h-6 w-[65px] bg-[#3b4453] text-center font-bold [clip-path:polygon(10px_0,100%_0,calc(100%_-_10px)_100%,0_100%)]">Objet</button>
        <button type="button" className="ml-[7px] w-[73px] text-left">Présentation1</button>
        <span className="ml-[7px]"><Slash /></span>
      </div>
      <div className="ml-auto mr-1 mt-[2px] flex gap-[3px]">
        <output className="flex h-6 w-[180px] items-center justify-end bg-[#3b4453] pb-[2px] pr-[5px] text-[12px]">2372.5926, 158.3812, 0.0000</output>
        <button type="button" aria-label="Isoler les objets" className="flex h-6 w-6 items-center justify-center border border-[#3b5f8a] bg-[#5e8dc2]">
          <Svg w={18} vb="0 0 18 18">
            <circle cx="9" cy="9" r="7.500" fill="#88acd4" stroke="#f2f2f2" strokeWidth="1.200" />
            <path d="M8 11.500l6-6-3.500 7z" fill="#fff" />
          </Svg>
        </button>
      </div>
    </footer>
  );
}

export default function App() {
  return (
    <div className="bg-[#e8eef2]">
      <div className="relative flex min-h-screen flex-col overflow-hidden rounded-lg bg-[#222933] font-['Open_Sans','Noto_Sans',sans-serif] text-[11px] leading-[15px] text-[#f0f0f0] after:pointer-events-none after:absolute after:inset-0 after:rounded-lg after:border after:border-[#0c93d6] after:content-['']">
        <TitleBar />
        <div className="flex h-6 shrink-0 items-end pl-2">
          <button type="button" className="h-5 w-[50px] bg-[#3b4453] pb-[2px]">Début</button>
          <button type="button" aria-label="Réduire le ruban" className="mb-[5px] ml-[22px] flex items-center gap-[5px]">
            <Svg w={15} h={8} vb="0 0 15 8"><path d="M0 0h15v8H0z" fill="#f2f2f2" /><path d="M5 5.500h5L7.500 2.500z" fill="#444" /></Svg>
            <Caret small />
          </button>
        </div>
        <Ribbon />
        <DocumentTabs />
        <div className="mx-1 h-1 shrink-0 bg-[#3b4453]" />
        <main className="relative flex-1 overflow-hidden bg-[#212830]">
          <Drawing />
          <Legend />
          <div className="absolute right-[15px] top-[10px] flex items-center gap-[10px]">
            <button type="button" aria-label="Réduire le dessin"><Svg w={10} vb="0 0 10 10"><path d="M0 6h10v3H0z" fill="#f2f2f2" /></Svg></button>
            <button type="button" aria-label="Restaurer le dessin"><Svg w={10} vb="0 0 10 10"><path d="M1 3.500h6v5.500H1z" stroke="#f2f2f2" strokeWidth="2" /><path d="M2.500.700h6.800V8" stroke="#f2f2f2" strokeWidth="1.300" /></Svg></button>
            <button type="button" aria-label="Fermer le dessin"><Svg w={10} vb="0 0 10 10"><path d="M1.500 1l7 8M8.500 1l-7 8" stroke="#f2f2f2" strokeWidth="2.400" /></Svg></button>
          </div>
          <ViewCube />
          <NavBar />
          <CommandLine />
        </main>
        <div className="mx-1 h-1 shrink-0 bg-[#3b4453]" />
        <StatusBar />
      </div>
    </div>
  );
}
